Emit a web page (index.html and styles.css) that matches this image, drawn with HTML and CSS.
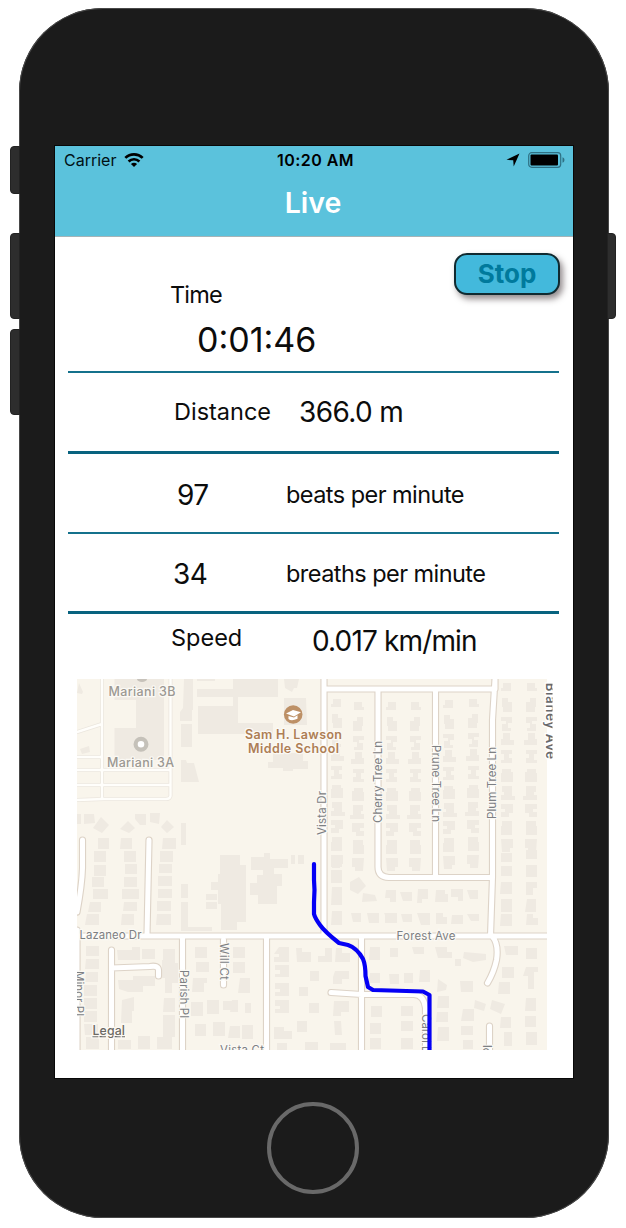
FILE: index.html
```html
<!DOCTYPE html>
<html lang="en">
<head>
<meta charset="utf-8">
<title>Live</title>
<link rel="stylesheet" href="styles.css">
</head>
<body>
<div class="phone">
  <span class="key key-mute"></span>
  <span class="key key-up"></span>
  <span class="key key-down"></span>
  <span class="key key-power"></span>
  <main class="screen">
    <header class="nav">
      <div class="status">
        <div class="carrier"><span>Carrier</span>
          <svg width="20" height="14" viewBox="0 0 21 15"><g fill="none" stroke="#000" stroke-width="2.900"><path d="M1.200 5.200C6.400.2 14.600.2 19.800 5.200"/><path d="M4.700 9C8 5.900 13 5.900 16.300 9"/></g><path d="M7.200 11.800C9.200 10.100 11.800 10.100 13.800 11.800L10.500 15z"/></svg>
        </div>
        <div class="clock">10:20 AM</div>
        <div class="indicators">
          <svg width="14" height="14" viewBox="0 0 14 14"><path d="M13.500.5 7.700 13.500 7.200 7.300.5 6.800z"/></svg>
          <svg width="37" height="16" viewBox="0 0 37 16"><rect x=".7" y=".7" width="32" height="14.600" rx="3" fill="none" stroke="#2f7184" stroke-width="1.200"/><rect x="2.500" y="2.500" width="27.500" height="11" rx="1"/><path d="M34.500 5.300c2.600.8 2.600 4.600 0 5.400z" fill="#2f7184"/></svg>
        </div>
      </div>
      <h1 class="title">Live</h1>
    </header>

    <section class="panel panel-time">
      <div class="time">
        <div class="label time-label">Time</div>
        <div class="elapsed">0:01:46</div>
      </div>
      <button class="stop">Stop</button>
    </section>
    <section class="panel panel-distance">
      <div class="label distance-label">Distance</div>
      <div class="value distance-value">366.0 m</div>
    </section>
    <section class="panel panel-heart">
      <div class="value rate">97</div>
      <div class="label unit">beats per minute</div>
    </section>
    <section class="panel panel-breath">
      <div class="value rate rate-breath">34</div>
      <div class="label unit">breaths per minute</div>
    </section>
    <section class="panel panel-speed">
      <div class="label speed-label">Speed</div>
      <div class="value speed-value">0.017 km/min</div>
    </section>

    <svg class="map" width="480" height="371" viewBox="77 679 480 371">
      <defs>
        <clipPath id="frame"><path d="M77 679h470v371H77z"/></clipPath>
        <g id="lots">
          <path d="M2 4h8v8H0V9h2zM1 19h6v4h4v10H2v-5H1zM0 38h11v6H7v5h3v3H1v-7h4v-3H0zM2 54h7v7h4v5H0v-6h2zM0 71h11v4H8v4h3v5H0v-3h3v-6H0zM1 90h9v3h2v10H0v-9h1zM1 107h10v10h3v4H0v-5h3v-3H1zM0 125h12v9H8v4H0v-5h4v-3H0zM1 142h10v14H0v-9h1zM0 160h12v9H9v4H1z"/>
        </g>
        <g id="roads">
          <path d="M324 675V936M324 689H495V675M378 689V867Q378 877 389 877.500H492M435.500 689V877M495 679 492.500 720V877L490.500 936M77 936H550M551 675V1055M149 840 147 934M82.500 840V868Q82 885 77 912M111.500 950V1055M111.500 968L150 966.500Q158 965 158.500 970V976M182.500 936V1055M223.500 940V985M266.500 936V1055M361.500 936V1055M331 992.500 362 994.500H414Q424 995 425.500 1008V1055M492 936Q499 944 496.500 960 494 972 487.500 983M489.500 1026V1055M77 930V1055"/>
        </g>
      </defs>
      <g clip-path="url(#frame)">
        <path class="land" d="M77 679h470v371H77z"/>
        <path class="block" d="M114.500 679H164v81h-49.500v-32H136v-28h-21.500zM184 679h9v31h-1v11h-12v-9l3-4zM181 724h11v23h-11zM181 760h5l1 3h7l5 19h-18zM197 679h18v2h-18zM197 689h36v-10h45v18h-40v26h35v11h-75v-28h35v-9h-36zM284 679h15l-2 9h-3l-2 4-7-4zM284 698h22l1 27h-23zM273 753h30v8h5v8h-15v2h-10v-3h-15v-6h5zM79 683l4 9-1 2-5-1zM80 749l9-3 1 6-8 2z"/>
        <path class="block" d="M77 814h4v10h-4zM84 814h10l1 9-11 1zM101 817l8 8-7 8-9-5zM135 814h11v11h-6l-5-6zM150 813h10l-1 11-9-2zM128 821l7 7-6 5-9-4zM167 820l7 7-7 6-6-6zM181 823h5v22h-5zM98 838h11v11H98zM94 851h12v11H94zM121 838h11v11h-12zM124 851h12v11h-12zM163 838h13v11h-14zM160 851h13v11h-13zM94 865h12v11H94zM92 877h12v10H92zM93 889h15v10H93zM90 902h11v10H88zM87 914h12v11H85zM125 864h12v10h-12zM124 877h13v10h-13zM122 889h17v10h-17zM124 902h13v9h-14zM122 914h12v11h-13zM159 864h13v9h-13zM158 876h14v10h-14zM158 889h14v9h-14zM157 901h14v10h-14zM157 914h14v11h-15z"/>
        <path class="block" d="M220 855h20v10h6v57h-9v8h-16v-40h-10v-8h9zM181 884h7v14h-7zM181 902h7v25h24v4h-31zM206 894h11v6h-11zM206 902h11v7h-11zM251 857h13v-4h6v6h18v9h-14v6h8v12h-5v18h-19v-9h-8v-12h7v-8h6v-5h-12zM291 855h4v9h-4zM298 855h6v9h-6zM218 874h14v30h-14z"/>
        <path class="block" d="M86 946h13v10H86zM86 959h13v10H85zM86 972h12v10H85zM84 985h13v11H84zM84 998h13v11H84zM84 1011h13v11H84zM84 1024h14v11H85zM86 1037h13v12H86zM117 950h15v-3h8v13h-22zM142 949h13v10h-13zM163 949h12v14h3v20h-6v10h-7v-15h-3v-18h1zM118 980h15v-4h22v10h-12v6h-15l-9-3zM122 1000l12-3v14h-2v12h-11zM164 998h11v14h-12zM163 1015h12v22h-12zM138 1036h12v13h-12zM157 1037h15v12h-15zM118 1040h13v9h-13z"/>
        <path class="block" d="M195 947h12v11h-12zM196 962h13v10h-13zM193 978h14v5h-3v9h-12zM191 1002h12v14h-12zM207 1000h12v14h-12zM195 1024h11v12h-11zM213 1022h12v14h-12zM223 1001h9v9h-9zM233 947h12v11h-12zM233 962h12v11h-12zM240 978h10v15h-12zM232 1000h6v12h-8zM245 1003h6v10h-6zM230 1026h10v12h-12zM242 1025h11v14h-11z"/>
        <path class="block" d="M279 947h10v15h-15v-5h5v-3h-5zM275 965h14v12h-14v-3h5v-4h-5zM275 983h14v13h-14v-4h5v-3h-5zM275 1000h14v13h-14v-4h5v-3h-5zM274 1027h10v4h8v8h-18zM277 1043h10v7h-10zM296 948h6v4h9v10h-14zM325 948h7v14h-14v-6h7zM336 948h6v5h8v9h-15zM310 971h9v10h-9zM335 971h14v8h-7v5h-9v-7zM299 987h9v9h-9zM309 1003h10v10h-10zM334 1001h15v11h-8v4h-8zM297 1021h10v11h-10zM334 1021h7l1 14h-7zM305 1042h13v8h-13zM330 1043h16v7h-16z"/>
        <use class="block" href="#lots" x="331" y="695"/>
        <path class="block" d="M331 857h11v10h-11zM331 870h11v13h-11zM332 887h10v18h-11zM332 911h10v14h-11zM350 882l9-5 7 9-8 8-8-4zM363 893l12 2 2 6-15 1zM351 913h10v9h-8zM367 913h12v10h-10zM385 913h12v10h-12z"/>
        <use class="block" href="#lots" transform="matrix(-1 0 0 1 364 698)"/>
        <use class="block" href="#lots" transform="translate(386 698)"/>
        <use class="block" href="#lots" transform="matrix(-1 0 0 1 421 698)"/>
        <use class="block" href="#lots" transform="translate(443 696)"/>
        <use class="block" href="#lots" transform="matrix(-1 0 0 1 479 695)"/>
        <use class="block" href="#lots" transform="translate(501 679)"/>
        <use class="block" href="#lots" transform="matrix(-1 0 0 1 537 679)"/>
        <path class="block" d="M501 853h11v9h-11zM501 866h11v10h-11zM501 882h11v12h-12zM501 899h11v13h-11zM501 914h11v12h-12zM526 850h11v9h-11zM526 865h11v12h-11zM526 882h11v6h-4v7h-7zM527 899h9v13h-11zM527 914h6v4h5v7h-12z"/>
        <path class="block" d="M386 890h10v12h-6v-4h-5zM400 892h12v9h-9zM418 889h10v10h-6v4h-5zM436 890h9v4h3v8h-13zM451 889h12v12h-5v-4h-7zM467 890h11v9h-8zM384 913h11v10h-6zM401 914h11v8h-9zM417 913h13v12h-9zM436 913h7v4h4v7h-11zM452 915h11v9h-12zM467 914h12v7h-8z"/>
        <path class="block" d="M390 948h8v9h-8zM370 947h10v13h-11zM370 973h10v10h-12zM389 974h10v10h-9zM412 947h12v7h-10zM404 973h9v10h-9zM420 970h10v12h-11zM435 947h12v5h5v6h-14zM464 952l22 2v6l-13 2-10-4zM455 959h6v7h-6zM438 979l9 6-1 5-9 2zM460 981h13v11h-12zM438 996h11v12h-12zM437 1012h11v10h-12zM438 1027h11v14h-12zM401 1006h12v10h-12zM401 1021h12v10h-12zM401 1038h12v11h-12zM371 1006h11v11h-11zM370 1023h11v11h-11zM370 1038h11v11h-11zM463 1009h11v12h-13zM461 1026h12v9h-12zM463 1040h10v9h-10zM475 1000l11 4-2 7-10-3zM492 1000l13 4-4 10-11-5zM504 946h14v9h-12zM502 967h12v11h-12zM499 982h11v12h-12zM501 1017h10v11h-11zM504 1032h8v14h-8zM526 948h11v11h-11zM526 967h12v5h-4v17h-6v-13h-5zM526 998h10v13h-11zM525 1016h11v11h-11zM526 1032h11v13h-11z"/>

        <g class="path-edge"><path d="M102 675V798M170.500 675V796Q170 799 166 799H104L77 800M77 732 102 724M77 757H102M77 770H170M77 785H170"/></g>
        <g class="path-fill"><path d="M102 675V798M170.500 675V796Q170 799 166 799H104L77 800M77 732 102 724M77 757H102M77 770H170M77 785H170"/></g>
        <use class="road-edge" href="#roads"/>
        <use class="road-fill" href="#roads"/>

        <path d="M137 679a5 3 0 0 0 10 0z" fill="#c7c2ba"/>
        <circle cx="141" cy="744.300" r="5.400" fill="#fff" stroke="#c5c1b9" stroke-width="4.200"/>
        <g class="place">
          <text x="108.500" y="696" textLength="67">Mariani 3B</text>
          <text x="107" y="767" textLength="67">Mariani 3A</text>
        </g>
        <circle cx="293.200" cy="714.500" r="9.300" fill="#bd9066"/>
        <path d="M286 713.500l7-3.500 8 2.200-7 4.300zM288.500 716v3q3 2.500 9-.3v-3.500l-3.500 2.200z" fill="#fff"/>
        <g class="school">
          <text x="245" y="738.500" textLength="97">Sam H. Lawson</text>
          <text x="248" y="752.500" textLength="91">Middle School</text>
        </g>
        <g class="street">
          <text x="79.500" y="938.500" textLength="62">Lazaneo Dr</text>
          <text x="396.500" y="940" textLength="59">Forest Ave</text>
          <text transform="translate(326 835) rotate(-90)" textLength="44">Vista Dr</text>
          <text transform="translate(381.500 823) rotate(-90)" textLength="82">Cherry Tree Ln</text>
          <text transform="translate(431.500 745) rotate(90)" textLength="77">Prune Tree Ln</text>
          <text transform="translate(496 819) rotate(-90)" textLength="72">Plum Tree Ln</text>
          <text transform="translate(74.500 971) rotate(90)" textLength="45">Minor Pl</text>
          <text transform="translate(179.500 970) rotate(90)" textLength="48">Parish Pl</text>
          <text transform="translate(220 943) rotate(90)" textLength="37">Will Ct</text>
          <text transform="translate(422 1014) rotate(90)">Carol Lee Dr</text>
          <text transform="translate(492 1055) rotate(-90)">Pl</text>
          <text x="220" y="1054" textLength="44">Vista Ct</text>
        </g>
        <path class="route" d="M314 864V880L314.500 890 314 902V914Q315 918 320 925T339 943L348 945Q357 948 363 959 365.500 965 365.500 976L368 987 373 990 423 991.500 429.500 995V1055"/>
        <text class="legal" x="92.500" y="1035" textLength="32.500">Legal</text>
      </g>
      <svg x="540" y="679" width="12.500" height="90" viewBox="540 679 12.500 90"><text class="avenue" transform="translate(545.500 668) rotate(90)" textLength="91">N Blaney Ave</text></svg>
    </svg>
  </main>
  <div class="home"></div>
</div>
</body>
</html>
```
FILE: styles.css
```css
* { box-sizing: border-box; }

body {
  margin: 0;
  padding: 8px 0 0 19px;
  height: 1228px;
  overflow: hidden;
  background: #fff;
  color: #0c0c0c;
  font-family: Inter, "Liberation Sans", sans-serif;
}

.phone {
  position: relative;
  display: flex;
  flex-direction: column;
  width: 590px;
  height: 1210px;
  padding: 138px 36px 0;
  border-radius: 84px;
  background: #1b1b1b;
  box-shadow: inset 0 0 0 1px #484848;
}

/* Hardware keys on the sides of the case */
.key {
  position: absolute;
  left: -9px;
  width: 10px;
  height: 86px;
  border: 1px solid #222;
  border-radius: 4px 0 0 4px;
  background: #2d2d2d;
}
.key-mute { top: 138px; height: 48px; }
.key-up { top: 225px; }
.key-down { top: 321px; }
.key-power { top: 225px; left: 588px; width: 9px; border-radius: 0 4px 4px 0; }

.screen {
  display: flex;
  flex-direction: column;
  width: 518px;
  height: 932px;
  background: #fff;
  outline: 1px solid #080808;
}

.nav {
  height: 91px;
  border-bottom: 1px solid #a5b4b8;
  background: #5bc2dc;
}

.status {
  display: grid;
  grid-template-columns: 1fr auto 1fr;
  align-items: center;
  height: 28px;
  padding: 0 8px 0 9px;
  color: #001014;
  font-size: 16px;
}
.status svg { display: block; }
.carrier { display: flex; align-items: center; gap: 8px; }
.clock { padding-left: 2px; color: #000; font-weight: 600; letter-spacing: .45px; }
.indicators { display: flex; align-items: center; justify-content: flex-end; gap: 8px; }

.title {
  margin: 11px 0 0;
  padding-right: 2px;
  color: #fff;
  font-size: 28.500px;
  font-weight: 600;
  line-height: 36px;
  text-align: center;
}

.panel {
  display: flex;
  margin: 0 14px 0 13px;
  border-bottom: 2px solid #14718c;
}

.label { font-size: 23.500px; line-height: 30px; }
.value { font-size: 28px; line-height: 36px; }

.panel-time {
  justify-content: space-between;
  height: 136px;
  padding: 16px 0 0 102px;
}
.time { padding-top: 27px; }
.time-label { letter-spacing: -.8px; }
.elapsed { padding: 8px 0 0 27px; font-size: 34px; line-height: 44px; }

.stop {
  width: 106px;
  height: 42px;
  margin-right: -1px;
  padding: 0;
  border: 2px solid #102a30;
  border-radius: 13px;
  background: #43b9dc;
  box-shadow: 3px 4px 6px rgba(40, 25, 30, .5);
  color: #007a9c;
  font: 700 26px/38px Inter, sans-serif;
}

.panel-distance, .panel-heart, .panel-breath { align-items: center; }
.panel-distance { height: 81px; border-bottom: 3px solid #08637f; padding-left: 106px; }
.distance-label { width: 125px; }
.distance-value { letter-spacing: -.6px; }
.panel-heart { height: 80px; padding: 3px 0 0 109px; }
.rate { width: 109px; letter-spacing: -.5px; }
.unit { letter-spacing: -.55px; }
.panel-breath { height: 80px; border-bottom: 3px solid #08637f; padding: 2px 0 0 105px; }
.rate-breath { width: 113px; }
.panel-speed { height: 65px; padding: 9px 0 0 103px; border: 0; }
.speed-label { width: 141px; }
.speed-value { letter-spacing: -.85px; }

.map { display: block; margin-left: 22px; }
.land { fill: #f9f5ec; }
.block { fill: #efeae2; }
.path-edge, .path-fill, .road-edge, .road-fill { fill: none; stroke-linecap: round; stroke-linejoin: round; }
.path-edge { stroke: #ebe6de; stroke-width: 4; }
.path-fill { stroke: #fffefb; stroke-width: 2.400; }
.road-edge { stroke: #ddd3c7; stroke-width: 7.200; }
.road-fill { stroke: #fff; stroke-width: 5; }
.route { fill: none; stroke: #0500f5; stroke-width: 4.200; stroke-linecap: round; stroke-linejoin: round; }
.map text { paint-order: stroke; stroke: #fbf9f4; stroke-width: 2.400px; }
.place { fill: #9b9892; font-size: 12.500px; font-weight: 500; }
.school { fill: #ae7e55; font-size: 12.500px; font-weight: 600; }
.street { fill: #7d8083; font-size: 11.500px; }
.legal { fill: #6b6964; font-size: 12.500px; font-weight: 500; text-decoration: underline; }
.map .avenue { fill: #67696c; stroke: #fff; font-size: 13px; font-weight: 600; }

.home {
  width: 92px;
  height: 92px;
  margin: 24px 0 0 212px;
  border: 4px solid #696969;
  border-radius: 50%;
}
```
